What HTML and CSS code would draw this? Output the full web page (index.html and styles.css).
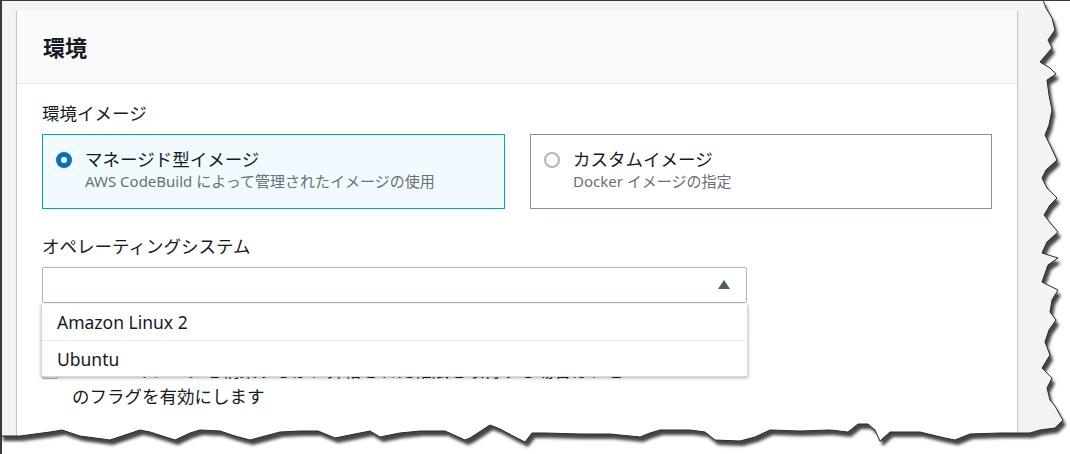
FILE: index.html
```html
<!DOCTYPE html>
<html lang="ja">
<head>
<meta charset="utf-8">
<link rel="stylesheet" href="styles.css">
</head>
<body>
<div class="frame">
  <section class="panel">
    <header class="panel-header"><h2>環境</h2></header>
    <div class="panel-body">
      <div class="field-label">環境イメージ</div>
      <div class="cards">
        <div class="card selected">
          <span class="radio on"></span>
          <div class="card-text">
            <div class="card-title">マネージド型イメージ</div>
            <div class="card-desc">AWS CodeBuild によって管理されたイメージの使用</div>
          </div>
        </div>
        <div class="card">
          <span class="radio"></span>
          <div class="card-text">
            <div class="card-title">カスタムイメージ</div>
            <div class="card-desc">Docker イメージの指定</div>
          </div>
        </div>
      </div>
      <div class="field-label os-label">オペレーティングシステム</div>
      <div class="select-wrap">
        <div class="select"><span class="caret"></span></div>
        <ul class="dropdown">
          <li>Amazon Linux 2</li>
          <li>Ubuntu</li>
        </ul>
      </div>
      <div class="check-row">
        <span class="checkbox"></span>
        <div class="check-text"><span class="hidden-line">Docker イメージを構築するか、昇格された権限を取得する場合は、こ</span><br>のフラグを有効にします</div>
      </div>
    </div>
  </section>
  <svg class="torn" width="1070" height="454" viewBox="0 0 1070 454">
    <defs>
      <clipPath id="outside">
        <path d="M1043,0 L1046,8 L1052,18 L1055,30 L1048,40 L1052,48 L1040,62 L1050,68 L1056,74 L1047,80 L1049,95 L1052,110 L1049,125 L1045,135 L1050,145 L1057,160 L1046,170 L1042,178 L1047,188 L1057,198 L1050,205 L1044,215 L1052,225 L1058,232 L1047,242 L1042,253 L1058,258 L1048,265 L1042,282 L1058,290 L1052,300 L1050,312 L1056,320 L1049,330 L1045,342 L1050,355 L1042,368 L1052,378 L1047,388 L1050,400 L1055,406 L1060,415 L1063,420 L1055,428 L1040,430 L1030,433 L1000,433 L970,434 L955,440 L945,438 L920,432 L890,432 L880,441 L875,430 L868,424 L858,424 L848,432 L830,430 L800,431 L770,430 L755,437 L740,441 L715,440 L705,432 L690,430 L660,430 L650,433 L640,437 L610,434 L580,434 L545,433 L532,433 L525,442 L515,437 L500,429 L490,425 L470,438 L465,440 L445,431 L420,431 L400,433 L380,437 L370,431 L345,436 L335,438 L318,431 L300,431 L280,432 L250,440 L235,436 L220,431 L200,430 L190,433 L175,440 L150,432 L140,430 L110,440 L80,436 L62,430 L50,432 L20,436 L0,436 L0,454 L1070,454 L1070,0 Z"/>
      </clipPath>
      <filter id="blur" x="-5%" y="-5%" width="110%" height="110%">
        <feGaussianBlur stdDeviation="1.5"/>
      </filter>
    </defs>
    <g clip-path="url(#outside)">
      <rect width="1070" height="454" fill="#ffffff"/>
      <path transform="translate(3,5)" filter="url(#blur)" fill="#444444" d="M0,0 L1043,0 L1046,8 L1052,18 L1055,30 L1048,40 L1052,48 L1040,62 L1050,68 L1056,74 L1047,80 L1049,95 L1052,110 L1049,125 L1045,135 L1050,145 L1057,160 L1046,170 L1042,178 L1047,188 L1057,198 L1050,205 L1044,215 L1052,225 L1058,232 L1047,242 L1042,253 L1058,258 L1048,265 L1042,282 L1058,290 L1052,300 L1050,312 L1056,320 L1049,330 L1045,342 L1050,355 L1042,368 L1052,378 L1047,388 L1050,400 L1055,406 L1060,415 L1063,420 L1055,428 L1040,430 L1030,433 L1000,433 L970,434 L955,440 L945,438 L920,432 L890,432 L880,441 L875,430 L868,424 L858,424 L848,432 L830,430 L800,431 L770,430 L755,437 L740,441 L715,440 L705,432 L690,430 L660,430 L650,433 L640,437 L610,434 L580,434 L545,433 L532,433 L525,442 L515,437 L500,429 L490,425 L470,438 L465,440 L445,431 L420,431 L400,433 L380,437 L370,431 L345,436 L335,438 L318,431 L300,431 L280,432 L250,440 L235,436 L220,431 L200,430 L190,433 L175,440 L150,432 L140,430 L110,440 L80,436 L62,430 L50,432 L20,436 L0,436 Z"/>
    </g>
    <path fill="none" stroke="#2b2b2b" stroke-width="1" d="M1043,0 L1046,8 L1052,18 L1055,30 L1048,40 L1052,48 L1040,62 L1050,68 L1056,74 L1047,80 L1049,95 L1052,110 L1049,125 L1045,135 L1050,145 L1057,160 L1046,170 L1042,178 L1047,188 L1057,198 L1050,205 L1044,215 L1052,225 L1058,232 L1047,242 L1042,253 L1058,258 L1048,265 L1042,282 L1058,290 L1052,300 L1050,312 L1056,320 L1049,330 L1045,342 L1050,355 L1042,368 L1052,378 L1047,388 L1050,400 L1055,406 L1060,415 L1063,420 L1055,428 L1040,430 L1030,433 L1000,433 L970,434 L955,440 L945,438 L920,432 L890,432 L880,441 L875,430 L868,424 L858,424 L848,432 L830,430 L800,431 L770,430 L755,437 L740,441 L715,440 L705,432 L690,430 L660,430 L650,433 L640,437 L610,434 L580,434 L545,433 L532,433 L525,442 L515,437 L500,429 L490,425 L470,438 L465,440 L445,431 L420,431 L400,433 L380,437 L370,431 L345,436 L335,438 L318,431 L300,431 L280,432 L250,440 L235,436 L220,431 L200,430 L190,433 L175,440 L150,432 L140,430 L110,440 L80,436 L62,430 L50,432 L20,436 L0,436"/>
  </svg>
</div>
</body>
</html>
```

FILE: styles.css
```css
* { box-sizing: border-box; }
html, body { margin: 0; padding: 0; background: #ffffff; }
body {
  font-family: "Noto Sans", "Noto Sans CJK JP", sans-serif;
  color: #16191f;
}
.frame {
  position: relative;
  width: 1070px;
  height: 454px;
  overflow: hidden;
  background: #f2f3f3;
  border-top: 1px solid #3a3a3a;
  border-left: 2px solid #3a3a3a;
  padding: 9px 0 0 15px;
}
.panel {
  width: 1000px;
  height: 520px;
  background: #ffffff;
  box-shadow: 0 1px 1px 0 rgba(0, 28, 36, 0.3), 1px 1px 1px 0 rgba(0, 28, 36, 0.15), -1px 1px 1px 0 rgba(0, 28, 36, 0.15);
}
.panel-header {
  height: 74px;
  background: #fafafa;
  border-bottom: 1px solid #eaeded;
  padding: 0 26px;
  display: flex;
  align-items: center;
}
.panel-header h2 {
  margin: 0;
  font-size: 22px;
  font-weight: 700;
  line-height: 30px;
}
.panel-body {
  padding: 17px 25px 0 25px;
}
.field-label {
  font-size: 17.5px;
  line-height: 24px;
  height: 24px;
}
.cards {
  margin-top: 9px;
  display: grid;
  grid-template-columns: 463px 462px;
  gap: 25px;
}
.card {
  height: 75px;
  border: 1px solid #879596;
  padding: 12px 13px 0 13px;
  display: flex;
  align-items: flex-start;
  gap: 13px;
}
.card.selected {
  border-color: #00a1c9;
  background: #f1faff;
}
.radio {
  flex: none;
  width: 16px;
  height: 16px;
  margin-top: 5px;
  border-radius: 50%;
  border: 2px solid #aab7b8;
  background: #fff;
}
.radio.on {
  border: 5px solid #0073bb;
}
.card-title {
  font-size: 17.5px;
  line-height: 24px;
}
.card-desc {
  font-size: 15px;
  line-height: 20px;
  color: #687078;
}
.os-label {
  margin-top: 25px;
}
.select-wrap {
  position: relative;
  margin-top: 9px;
  width: 705px;
}
.select {
  height: 36px;
  border: 1px solid #aab7b8;
  border-radius: 2px;
  background: #fff;
  display: flex;
  align-items: center;
  justify-content: flex-end;
  padding-right: 16px;
}
.caret {
  width: 0;
  height: 0;
  border-left: 6px solid transparent;
  border-right: 6px solid transparent;
  border-bottom: 9px solid #545b64;
  margin-top: -1px;
}
.dropdown {
  position: absolute;
  left: -1px;
  top: 37px;
  width: 707px;
  margin: 0;
  padding: 0;
  list-style: none;
  background: #fff;
  border: 1px solid #d5dbdb;
  border-top: none;
  box-shadow: 0 1px 3px rgba(0, 28, 36, 0.35);
  z-index: 2;
}
.dropdown li {
  height: 36px;
  line-height: 36px;
  padding-left: 15px;
  font-size: 17.5px;
}
.dropdown li + li {
  border-top: 1px solid #eaeded;
}
.check-row {
  margin-top: 54px;
  display: flex;
  align-items: flex-start;
  gap: 14px;
}
.checkbox {
  flex: none;
  width: 16px;
  height: 16px;
  margin-top: 6px;
  border: 1px solid #aab7b8;
  border-radius: 2px;
  background: #fff;
}
.check-text {
  font-size: 17.5px;
  line-height: 26px;
  white-space: nowrap;
}
.torn {
  position: absolute;
  left: -2px;
  top: -1px;
  z-index: 5;
}
```
